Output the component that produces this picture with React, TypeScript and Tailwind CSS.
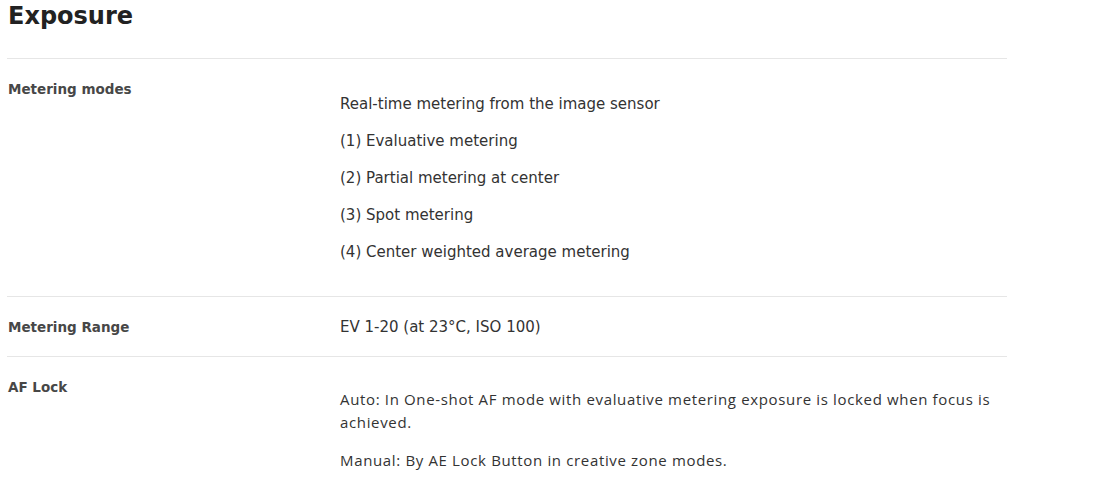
const gotham = "font-['DejaVu_Sans',sans-serif]";

type Row = { label: string; values: string[]; alt?: boolean; plain?: boolean };

const rows: Row[] = [
  {
    label: "Metering modes",
    values: [
      "Real-time metering from the image sensor",
      "(1) Evaluative metering",
      "(2) Partial metering at center",
      "(3) Spot metering",
      "(4) Center weighted average metering",
    ],
  },
  { label: "Metering Range", values: ["EV 1-20 (at 23°C, ISO 100)"], plain: true },
  {
    label: "AF Lock",
    values: [
      "Auto: In One-shot AF mode with evaluative metering exposure is locked when focus is achieved.",
      "Manual: By AE Lock Button in creative zone modes.",
    ],
    alt: true,
  },
];

export default function App() {
  return (
    <div className={`bg-white min-h-[484px] text-[#333] ${gotham}`}>
      <div className="w-[1000px] ml-[7px]">
        <h2 className="pl-px pt-[1px] h-[58px] text-[24px] leading-[30px] font-bold text-[#222]">Exposure</h2>
        {rows.map((row) => (
          <div key={row.label} className="flex border-t border-[#e6e6e6] pt-[19px] pb-[17px]">
            <div className="w-[333px] pl-px text-[13.5px] leading-[22px] font-bold text-[#474747]">{row.label}</div>
            <div
              className={`flex-1 flex flex-col text-[15px] leading-[23px] ${
                row.plain ? "" : "pt-[15px] pb-[15px]"
              } ${
                row.alt
                  ? "gap-[15px] -mt-[3px] font-['Open_Sans',sans-serif] text-[15.5px] tracking-[0.65px] pr-[8px]"
                  : "gap-[14px]"
              }`}
            >
              {row.values.map((v) => (
                <p key={v}>{v}</p>
              ))}
            </div>
          </div>
        ))}
      </div>
    </div>
  );
}
